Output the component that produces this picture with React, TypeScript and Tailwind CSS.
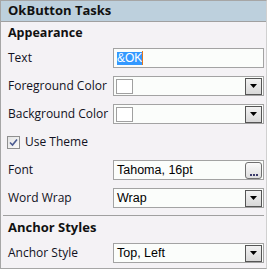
import { ReactNode } from "react";

const uiFont = { fontFamily: '"Open Sans", "Noto Sans", sans-serif' };
const valueFont = { fontFamily: '"Liberation Sans", sans-serif' };

function DropButton() {
  return (
    <span className="flex h-[17px] w-[17px] items-center justify-center border border-[#555555] bg-gradient-to-b from-[#f2f2f2] to-[#d8d8d8]">
      <svg width="7" height="4" viewBox="0 0 7 4">
        <path d="M0 0h7L3.5 4z" fill="#000" />
      </svg>
    </span>
  );
}

function Field({ children, drop, ellipsis }: { children?: ReactNode; drop?: boolean; ellipsis?: boolean }) {
  return (
    <div className="flex h-[20px] w-[151px] items-center border border-[#a3a3a3] bg-[#fbfdfb] pr-[1px]">
      <div className="flex min-w-0 flex-1 items-center">{children}</div>
      {drop && <DropButton />}
      {ellipsis && (
        <span className="flex h-[17px] w-[17px] items-end justify-center rounded-[3px] border border-[#707070] bg-gradient-to-b from-[#fafafa] to-[#dedede] pb-[2px]">
          <span className="flex gap-[1px]">
            <i className="h-[2px] w-[2px] bg-[#3b3b6b]" />
            <i className="h-[2px] w-[2px] bg-[#3b3b6b]" />
            <i className="h-[2px] w-[2px] bg-[#3b3b6b]" />
          </span>
        </span>
      )}
    </div>
  );
}

function Row({ label, children }: { label: string; children: ReactNode }) {
  return (
    <div className="grid h-[28px] grid-cols-[112px_151px] items-center">
      <span className="pl-[7px] text-[12px] text-[#111122]">{label}</span>
      {children}
    </div>
  );
}

function Value({ text }: { text: string }) {
  return <span className="pl-[3px] text-[12.5px] text-black" style={valueFont}>{text}</span>;
}

function Swatch() {
  return <span className="ml-[2px] h-[15px] w-[17px] border border-[#a0a0a0] bg-white" />;
}

export default function App() {
  return (
    <div className="h-[269px] w-[267px] border border-[#a6a6a6] border-r-[#d0d0d0] bg-[#f4f2f5] pb-[1px]" style={uiFont}>
      <div className="flex h-[21px] items-center border-b border-[#a0a0a0] bg-[#bdd0dd] pl-[7px]">
        <span className="text-[13px] font-bold text-[#111]">OkButton Tasks</span>
      </div>
      <div className="flex h-[22px] items-center pl-[7px] text-[12.5px] font-bold text-[#111]">Appearance</div>
      <Row label="Text">
        <Field>
          <span className="ml-[3px] flex h-[13px] items-center bg-[#3399ff] text-[12px] text-white" style={valueFont}>
            &amp;OK
          </span>
          <span className="h-[14px] w-[1px] bg-[#e07820]" />
        </Field>
      </Row>
      <Row label="Foreground Color">
        <Field drop>
          <Swatch />
        </Field>
      </Row>
      <Row label="Background Color">
        <Field drop>
          <Swatch />
        </Field>
      </Row>
      <div className="flex h-[28px] items-center pl-[6px]">
        <span className="flex h-[13px] w-[13px] items-center justify-center border border-[#8f8f8f] bg-gradient-to-br from-[#e4e4e4] to-[#fafafa]">
          <svg width="9" height="9" viewBox="0 0 9 9">
            <path d="M1 4.5l2.5 2.5L8 1.5" fill="none" stroke="#4a5a90" strokeWidth="1.6" />
          </svg>
        </span>
        <span className="ml-[5px] text-[12px] text-[#111122]">Use Theme</span>
      </div>
      <Row label="Font">
        <Field ellipsis>
          <Value text="Tahoma, 16pt" />
        </Field>
      </Row>
      <Row label="Word Wrap">
        <Field drop>
          <Value text="Wrap" />
        </Field>
      </Row>
      <div className="mx-[2px] mt-[3px] border-t border-[#a0a0a0]" />
      <div className="flex h-[23px] items-center pl-[7px] text-[13px] font-bold text-[#111]">Anchor Styles</div>
      <Row label="Anchor Style">
        <Field drop>
          <Value text="Top, Left" />
        </Field>
      </Row>
    </div>
  );
}
